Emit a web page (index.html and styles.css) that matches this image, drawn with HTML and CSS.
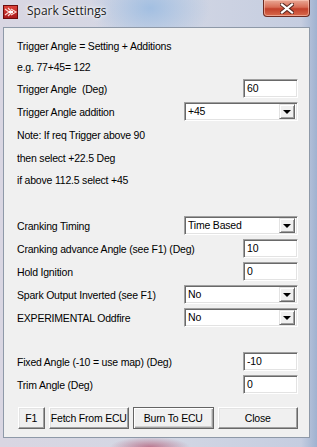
FILE: index.html
```html
<!DOCTYPE html>
<html lang="en">

<head>
    <meta charset="UTF-8">
    <meta name="viewport" content="width=device-width, initial-scale=1.0">
    <title>Spark Settings</title>
    <link rel="stylesheet" href="styles.css">
</head>

<body>
    <div class="window">
        <div class="titlebar">
            <svg class="app-icon" width="15" height="14" viewBox="0 0 15 14">
                <defs>
                    <linearGradient id="ic" x1="0" y1="0" x2="0" y2="1">
                        <stop offset="0" stop-color="#e0443c" />
                        <stop offset="1" stop-color="#a8181a" />
                    </linearGradient>
                </defs>
                <rect x="0.5" y="0.5" width="14" height="13" fill="url(#ic)" stroke="#6e0c0c" />
                <path d="M2 4 L6 7 L2 10 M5 3 L9 7 L5 11 M8 4 L13 7 L8 10" fill="none" stroke="#fbd6d0" stroke-width="1.2" />
                <rect x="6" y="6" width="4" height="2" fill="#fff" />
            </svg>
            <span class="title">Spark Settings</span>
            <div class="close-btn">
                <svg width="14" height="11" viewBox="0 0 14 11">
                    <path d="M2 1.5 L12 9.5 M12 1.5 L2 9.5" stroke="#5a2a22" stroke-width="4.2" stroke-linecap="square" />
                    <path d="M2 1.5 L12 9.5 M12 1.5 L2 9.5" stroke="#fff" stroke-width="2.2" stroke-linecap="square" />
                </svg>
            </div>
        </div>

        <div class="client">
            <div class="row short"><span>Trigger Angle = Setting + Additions</span></div>
            <div class="row short"><span>e.g. 77+45= 122</span></div>
            <div class="row">
                <span>Trigger Angle&nbsp; (Deg)</span>
                <div class="field">60</div>
            </div>
            <div class="row">
                <span>Trigger Angle addition</span>
                <div class="combo"><span>+45</span><i class="drop"></i></div>
            </div>
            <div class="row"><span>Note: If req Trigger above 90</span></div>
            <div class="row"><span>then select +22.5 Deg</span></div>
            <div class="row mid"><span>if above 112.5 select +45</span></div>

            <div class="row gap-after-note">
                <span>Cranking Timing</span>
                <div class="combo"><span>Time Based</span><i class="drop"></i></div>
            </div>
            <div class="row">
                <span>Cranking advance Angle (see F1) (Deg)</span>
                <div class="field">10</div>
            </div>
            <div class="row">
                <span>Hold Ignition</span>
                <div class="field">0</div>
            </div>
            <div class="row">
                <span>Spark Output Inverted (see F1)</span>
                <div class="combo"><span>No</span><i class="drop"></i></div>
            </div>
            <div class="row">
                <span>EXPERIMENTAL Oddfire</span>
                <div class="combo"><span>No</span><i class="drop"></i></div>
            </div>

            <div class="row gap-after-crank">
                <span>Fixed Angle (-10 = use map) (Deg)</span>
                <div class="field">-10</div>
            </div>
            <div class="row">
                <span>Trim Angle (Deg)</span>
                <div class="field">0</div>
            </div>

            <div class="buttons">
                <div class="btn btn-f1">F1</div>
                <div class="btn btn-wide">Fetch From ECU</div>
                <div class="btn btn-wide btn-default">Burn To ECU</div>
                <div class="btn btn-wide">Close</div>
            </div>
        </div>
    </div>
</body>

</html>
```

FILE: styles.css
```css
* {
    margin: 0;
    padding: 0;
    box-sizing: border-box;
}

body {
    background-color: #c9d1de;
    font-family: "Liberation Sans", Arial, sans-serif;
    font-size: 10.5px;
    letter-spacing: -0.2px;
    color: #000;
}

/* aero frame */
.window {
    width: 317px;
    height: 447px;
    background:
        radial-gradient(ellipse 60px 40px at 150px 8px, rgba(150, 185, 225, .8), rgba(150, 185, 225, 0)),
        radial-gradient(ellipse 40px 10px at 150px 447px, rgba(170, 60, 90, .6), rgba(170, 60, 90, 0)),
        linear-gradient(to right, #d9d6e2 0%, #d3d7e4 50%, #c5cde0 95%, #9fb2d0 100%);
}

.titlebar {
    height: 27px;
    display: flex;
    align-items: flex-start;
    position: relative;
}

.app-icon {
    margin: 5px 0 0 3px;
}

.title {
    font-family: "Open Sans", "Noto Sans", sans-serif;
    font-size: 12px;
    letter-spacing: 0;
    line-height: 15px;
    margin: 3px 0 0 9px;
    color: #1b1b1b;
    text-shadow: 0 0 6px #fff, 0 0 3px #fff;
}

.close-btn {
    position: absolute;
    top: 0;
    left: 263px;
    width: 47px;
    height: 17px;
    border: 1px solid #6d2b22;
    border-top: none;
    border-radius: 0 0 4px 4px;
    background: linear-gradient(to bottom, #e9a896 0%, #d86d56 45%, #c2402b 55%, #d86a4c 100%);
    box-shadow: inset 0 0 0 1px rgba(255, 210, 195, .55);
    display: flex;
    align-items: center;
    justify-content: center;
}

/* client area */
.client {
    margin-left: 3px;
    width: 307px;
    height: 411px;
    background-color: #f0f0f0;
    border: 1px solid #8e99a8;
    padding: 7px 11px 0 13px;
}

.row {
    height: 23px;
    display: flex;
    align-items: center;
    justify-content: space-between;
    white-space: nowrap;
}

.row.short {
    height: 21px;
}

.row.mid {
    height: 22px;
}

.gap-after-note {
    margin-top: 23px;
}

.gap-after-crank {
    margin-top: 21px;
}

/* sunken text box */
.field {
    width: 55px;
    height: 19px;
    background-color: #fff;
    border: 1px solid;
    border-color: #a0a0a0 #fff #fff #a0a0a0;
    box-shadow: inset 1px 1px #696969, inset -1px -1px #e3e3e3;
    padding: 0 0 0 3px;
    line-height: 17px;
}

/* drop down list */
.combo {
    width: 114px;
    height: 19px;
    background-color: #fff;
    border: 1px solid;
    border-color: #a0a0a0 #fff #fff #a0a0a0;
    box-shadow: inset 1px 1px #696969, inset -1px -1px #e3e3e3;
    padding: 2px 2px 2px 3px;
    display: flex;
    align-items: center;
    justify-content: space-between;
}

.combo span {
    line-height: 15px;
}

.drop {
    width: 16px;
    height: 15px;
    background-color: #f0f0f0;
    border: 1px solid;
    border-color: #e3e3e3 #696969 #696969 #e3e3e3;
    box-shadow: inset 1px 1px #fff, inset -1px -1px #a0a0a0;
    display: flex;
    align-items: center;
    justify-content: center;
}

.drop::after {
    content: "";
    border-left: 4px solid transparent;
    border-right: 4px solid transparent;
    border-top: 4px solid #000;
    margin-top: 1px;
}

/* bottom buttons */
.buttons {
    display: flex;
    margin-top: 11px;
    gap: 4px;
}

.btn {
    height: 22px;
    line-height: 20px;
    text-align: center;
    white-space: nowrap;
    background-color: #f0f0f0;
    border: 1px solid;
    border-color: #fff #696969 #696969 #fff;
    box-shadow: inset -1px -1px #a0a0a0, inset 1px 1px #e3e3e3;
}

.btn-f1 {
    width: 27px;
    margin-left: 1px;
}

.btn-wide {
    width: 82px;
}

.btn-default {
    border-color: #646464;
    box-shadow: inset 1px 1px #fff, inset -1px -1px #a0a0a0, inset -2px -2px #cfcfcf;
}
```
